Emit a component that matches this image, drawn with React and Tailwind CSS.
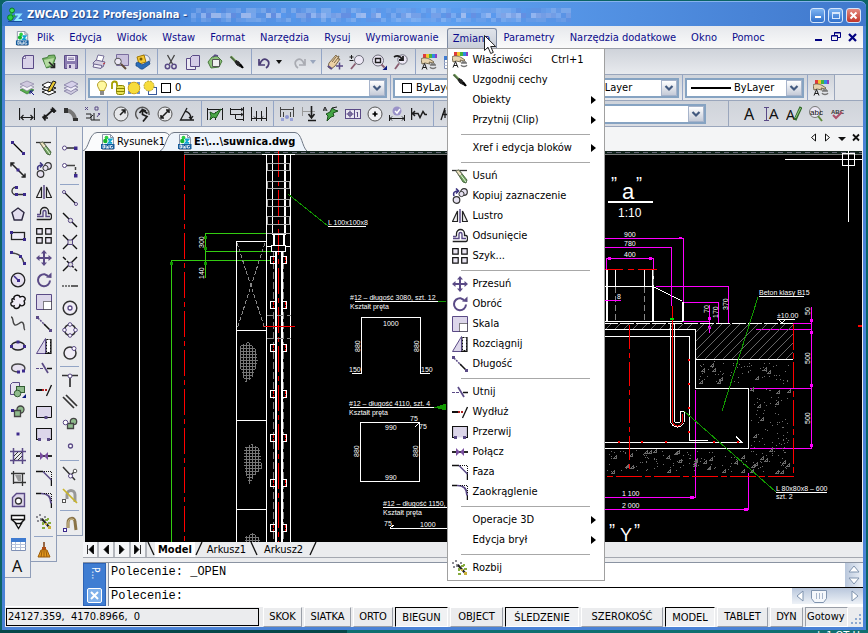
import React from "react";

const P = "#5a4a86";
const K = "#1c1c1c";

const icons = {
  logo: (
    <>
      <circle cx="5" cy="3.4" r="2.4" fill="#3fe05a" stroke="#0a7a20" />
      <circle cx="3.4" cy="10.6" r="2.8" fill="#2ccf46" stroke="#0a7a20" />
      <path d="M4.5 5.5L4 8.5M6.5 9.5l2-1" stroke="#1fae3a" strokeWidth="2" />
      <path d="M8 7.5h5.5L9 13h6" stroke="#8fe8ff" strokeWidth="2" />
      <path d="M1 14.5h14" stroke="#154c9c" />
    </>
  ),
  dwg: (
    <>
      <path d="M2.5.5h8l3 3v12h-11z" fill="#fdfdfd" stroke="#8b96a8" />
      <path d="M10.5.5v3h3" stroke="#8b96a8" />
      <circle cx="6.500" cy="3.600" r="1.900" fill="#2ecf44" />
      <circle cx="5.300" cy="7" r="2.200" fill="#16b52e" />
      <path d="M8 5.500h3.400L8.600 8.800h3.600" stroke="#10a4d0" strokeWidth="1.800" />
      <rect x="1" y="10" width="13.500" height="5" fill="#155c9c" />
      <path d="M3 11v3h1.500v-3zM6 11v3h3v-3M7.500 12v2M12.500 11.500h-2v2.500h2v-1.200" stroke="#fff" strokeWidth=".8" />
    </>
  ),
  fresh: (
    <>
      <path d="M5.500 1.500h9v13h-11v-11z" fill="#d9d2e8" stroke={P} />
      <path d="M3.500 4.500l3-3v3z" fill="#fff" stroke={P} strokeWidth=".7" />
    </>
  ),
  open: (
    <>
      <path d="M1.500 4.500l5-1 1-2 6-.500 1 3-3 8-6 2z" fill="#7cb66a" stroke="#3f7a38" />
      <path d="M3 6l10-2-2 6-6 3z" fill="#b5dba2" />
      <path d="M8 8l5 5m.500-4v4.500h-4" stroke="#222" strokeWidth="1.600" />
    </>
  ),
  save: (
    <>
      <path d="M1.500 1.500h13v13h-13z" fill="#8a7bb0" stroke={P} />
      <path d="M4 2h8v5H4z" fill="#eeeaf6" />
      <path d="M5 4h6M5 5.500h6" stroke={P} strokeWidth=".7" />
      <path d="M4 10h8v5H4z" fill="#d8d1e6" />
      <path d="M6 11h2v3H6z" fill={P} />
    </>
  ),
  print: (
    <>
      <path d="M5 7l2-6 6 1-2 6z" fill="#fff" stroke="#77709a" />
      <path d="M2 9l3-3 9 2-2 5H4z" fill="#d6d0e2" stroke="#6d6490" />
      <path d="M3 10l8 1.500-1 3-8-1.500z" fill="#f2eff8" stroke="#6d6490" />
      <path d="M12 10l2-1" stroke="#c33" />
    </>
  ),
  preview: (
    <>
      <path d="M3.500.500h12v11h-12z" fill="#c9c1dd" stroke="#7a6e9e" />
      <circle cx="5" cy="7.500" r="3.300" fill="#ece8f5" stroke="#555" />
      <path d="M8 10l5 5" stroke="#5f4b3a" strokeWidth="2" />
    </>
  ),
  globe: (
    <>
      <circle cx="10" cy="6" r="5" fill="#e7eaf2" stroke="#7784a5" />
      <path d="M2 3l7-2 2 7-7 2z" fill="#f6c936" stroke="#a27800" />
      <path d="M1 9c2-2 5 1 6 2l7-4 1 3-7 5c-3 1-5-3-7-3z" fill="#2b6cb8" stroke="#174680" strokeWidth=".7" />
      <circle cx="6" cy="5" r="1.500" fill="#7a5a00" />
    </>
  ),
  cut: (
    <>
      <path d="M4.500 1l5 9M11.500 1l-5 9" stroke="#444" strokeWidth="1.300" />
      <circle cx="4.500" cy="12.500" r="2.200" stroke={P} strokeWidth="1.500" />
      <circle cx="11" cy="12.500" r="2.200" stroke={P} strokeWidth="1.500" />
    </>
  ),
  copy: (
    <>
      <path d="M1.500 4.500h9v11h-9z" fill="#eceaf3" stroke={P} />
      <path d="M7.500 1.500h7v11h-9v-9z" fill="#d4cce6" stroke={P} />
    </>
  ),
  paste: (
    <>
      <path d="M1 8l4-5 5-1 5 5-3 6-8 1z" fill="#8dc07a" stroke="#48793c" />
      <path d="M5.500 5.500h7v7h-7z" fill="#eee" stroke="#555" />
      <path d="M6 3l2-2 3 1" stroke={P} strokeWidth="1.500" />
    </>
  ),
  brush: (
    <>
      <path d="M1.500 2.500l6 6" stroke="#4c6b3c" strokeWidth="2" />
      <path d="M3 2l4 4" stroke="#a9cf96" />
      <path d="M7 6.500l3 1.500 3 5.500-5-2.500-2-3z" fill="#222" stroke="#222" />
      <path d="M11 10l3 4" stroke="#000" strokeWidth="2" />
    </>
  ),
  undo: <path d="M2 5v6h6M3 10c1-4 4-6 7-4s2 6-1 8" stroke="#4a3d75" strokeWidth="1.700" />,
  redo: <path d="M14 5v6H8m5-1c-1-4-4-6-7-4s-2 6 1 8" stroke="#a9abb2" strokeWidth="1.700" />,
  hand: (
    <>
      <path d="M2 9L9 1l1 2 2-1-1 3 2 0-5 7-4 3-3-2z" fill="#ecd0a4" stroke="#7d6a4c" />
      <path d="M5 8l4-5M7 9l4-5" stroke="#7d6a4c" />
      <path d="M12.500 8.500v7M9 12h7" stroke={P} strokeWidth="1.500" />
      <path d="M1 12l4 3" stroke={P} strokeWidth="2" />
    </>
  ),
  zoomrt: (
    <>
      <circle cx="10" cy="6" r="4.500" fill="#ede8f5" stroke="#6c6c78" />
      <path d="M6.500 9.500L2 15" stroke="#8a5d70" strokeWidth="1.800" />
      <path d="M.500 3h4M2.500 1v4M.500 6.500h4" stroke={K} />
    </>
  ),
  zoomwin: (
    <>
      <circle cx="7" cy="6.500" r="5.500" fill="#ede8f5" stroke="#6c6c78" />
      <path d="M4.500 4.500h5v4h-5z" stroke={K} strokeWidth="1.400" />
      <path d="M10.500 10.500l3 3" stroke="#8a5d70" strokeWidth="1.800" />
      <path d="M16 11.500V16h-4.500z" fill="#0c1a80" />
    </>
  ),
  zoomprev: (
    <>
      <circle cx="9.500" cy="5.500" r="4.700" fill="#ede8f5" stroke="#6c6c78" />
      <path d="M6 9.500L2 15" stroke="#8a5d70" strokeWidth="1.800" />
      <path d="M1 3c3-2 6-1 8 2m1-3v4H6" stroke={K} strokeWidth="1.800" />
    </>
  ),
  props: (
    <>
      <path d="M2 0h3v4H2z" fill="#e23a3a" />
      <path d="M5 0h3v4H5z" fill="#f0c531" />
      <path d="M8 0h3v4H8z" fill="#46b53d" />
      <path d="M11 0h3v4h-3z" fill="#2f8ae0" />
      <path d="M14 0h2v4h-2z" fill="#8a3fc4" />
      <path d="M0 5c3-2 7-1 10 1l3 2-1 1-4-1 1 2-5-1-3 1z" fill="#e6d3ae" stroke="#6d6147" strokeWidth=".9" />
      <path d="M1 15.500l2.500-6 2.500 6M2 13.500h3" stroke={K} />
      <path d="M9 11h6M9 13c1 2 5 2 6 0M10 10h4" stroke="#777" strokeWidth="1.300" />
    </>
  ),
  layersG: (
    <>
      <path d="M1 10l7-3 7 3-7 4z" fill="#59ad4c" stroke="#2e7a2c" strokeWidth=".7" />
      <path d="M1 7l7-3 7 3-7 4z" fill="#f5f5f8" stroke="#8b84a4" strokeWidth=".7" />
      <path d="M1 4l7-3 7 3-7 3.500z" fill="#cfc8de" stroke="#8b84a4" strokeWidth=".7" />
      <path d="M15 15l-4-4m0 3v-3h3" stroke="#16108a" />
    </>
  ),
  layersE: (
    <>
      <path d="M1 12l7-3 7 3-7 3z" fill="#fff" stroke={K} />
      <path d="M1 9l6-4 8 3-7 3z" fill="#fff" stroke={K} />
      <path d="M1 5l6-3 6 2-7 4z" fill="#fff" stroke={K} />
      <path d="M7 10l5-9 3 1-5 9-3 1z" fill="#e8c733" stroke={K} />
    </>
  ),
  layersP: (
    <>
      <path d="M1 11l8-3 6 2-7 4.500z" fill="#cfcbe0" stroke="#7f78a0" strokeWidth=".8" />
      <path d="M1 8l8-3 6 2-7 4.500z" fill="#f1effa" stroke="#7f78a0" strokeWidth=".8" />
      <path d="M1 5l8-4 6 3-7 4z" fill="#d6d0ea" stroke="#7f78a0" strokeWidth=".8" />
    </>
  ),
  bulb: (
    <>
      <path d="M5.500 10.500c0-2-2-3-2-5.500a4.500 4 0 019 0c0 2.500-2 3.500-2 5.500z" fill="#fff8a0" stroke="#b59f2c" />
      <path d="M6 12h4M6 14h4" stroke="#666" strokeWidth="1.300" />
    </>
  ),
  lock: (
    <>
      <path d="M2 9V4a2.500 2.500 0 015 0v2" stroke="#a6a000" strokeWidth="1.800" />
      <rect x="6.500" y="5.500" width="8" height="9" rx="2" fill="#e8e255" stroke="#8b8500" />
      <path d="M7 8.500h7M7 11.500h7" stroke="#8b8500" />
    </>
  ),
  sun: (
    <>
      <path d="M2 2h3v3H2zM11 2h3v3h-3zM2 11h3v3H2zM11 11h3v3h-3z" fill="#6f93cf" />
      <circle cx="8" cy="8" r="5.800" fill="#f7dc3c" stroke="#c9a21d" />
    </>
  ),
  sunSq: (
    <>
      <rect x="6.500" y="7.500" width="8" height="7" fill="#fff" stroke="#37599c" />
      <circle cx="7" cy="6" r="5" fill="#f7dc3c" stroke="#b5a12c" strokeDasharray="2 1" />
    </>
  ),
  square: <rect x="3.500" y="3.500" width="9" height="9" fill="#fff" stroke="#000" />,
  dLin: <path d="M.500 2v12M15.500 2v12M2 11.500h12M4.500 9L2 11.500 4.500 14M11.500 9l2.500 2.500-2.500 2.500" stroke={K} strokeWidth="1.200" />,
  dAli: <path d="M1.500 10.500l3 4M11 1.500l4 4M3 12L13 3M3.500 8.500V12H7M9.500 3.500H13V7" stroke={K} strokeWidth="1.700" />,
  dArc: (
    <>
      <path d="M3 5c5-1 9 4 9 9" stroke="#777" strokeWidth="4" />
      <path d="M1 2h4v5H1zM10 12h5v3h-5z" fill="#333" />
    </>
  ),
  dOrd: (
    <>
      <path d="M0 1l3 3M3 1L0 4M10 1h3v3h-3zM13 7l2 2M15 7l-3 4" stroke={P} />
      <path d="M1 8h5v6h9M9 7v7M1 12h4l3-3" stroke={K} />
    </>
  ),
  dRad: (
    <>
      <circle cx="8" cy="8" r="7" fill="#e6e7ea" stroke="#555" />
      <path d="M7 9l5-5M8.500 4H12v3.500" stroke={K} strokeWidth="1.500" />
    </>
  ),
  dJog: (
    <>
      <path d="M3 13A6.700 6.700 0 1114 9" stroke="#555" strokeWidth="1.400" />
      <path d="M12.500 7.500L7.500 4v4.500l4.500 2-4 5M4.500 7l3-3.500L11 5" stroke={K} strokeWidth="1.700" />
    </>
  ),
  dDia: (
    <>
      <circle cx="8" cy="8" r="7" fill="#e6e7ea" stroke="#555" />
      <path d="M4 12l8-8M9 4h3v3M4 9v3h3" stroke={K} strokeWidth="1.500" />
    </>
  ),
  dAng: <path d="M8 2L1.500 14H15M6 5c4 1 6 4 6 8M10 11l2 2 2-3" stroke={K} strokeWidth="1.300" />,
  dQuick: (
    <>
      <path d="M.500 2v12M8.500 6v8M15.500 2v12M1 3.500h14" stroke={K} />
      <path d="M3 6l4 2 7-5-5 9-3-1-3 3 1-4z" fill="#4aa848" stroke="#1c5c1b" />
    </>
  ),
  dBase: <path d="M1.500 2v7M14.500 1v14M2 3.500h12M6.500 8v5M2 8.500h12M7 13.500h7M12 2l2 1.500L12 5M12 7l2 1.500-2 1.500" stroke={K} />,
  dCont: <path d="M.500 1v14M5.500 5v10M10.500 5v10M15.500 1v14M1 12.500h14M3 10.500l2 2M12 10.500l-2 2" stroke={K} />,
  dSpace: (
    <>
      <path d="M1.500 1v10M14.500 1v10M2 3.500h12M4.500 6v5M11.500 6v5" stroke="#444" />
      <path d="M2 12h3v3H2zM11 12h3v3h-3z" fill="#9aa3d8" />
      <circle cx="8" cy="11" r="2" fill="#8c95d0" />
    </>
  ),
  dBreak: (
    <>
      <path d="M1.500 1v9M2 5.500h12" stroke="#999" />
      <path d="M10.500 0v11M7 14.500h8M7.500 8l3 4 3-4" stroke={K} strokeWidth="1.600" />
    </>
  ),
  dLead: (
    <>
      <path d="M3 8l4-2 2-4 3 2 3 1-5 2 1 3-3 1-4 4 1-5z" fill="#44a544" stroke="#1b4f1b" />
      <path d="M0 5l2-4 2 4M1 4h2M9 2l5-1" stroke={K} />
    </>
  ),
  dTol: (
    <>
      <rect x=".500" y="3.500" width="15" height="9" fill="#e8e6f0" stroke={P} />
      <path d="M9.500 4v8M5 4.500v7M1.500 8h7M12.500 6v5M11.500 6.500h1" stroke={P} />
      <circle cx="5" cy="8" r="2" stroke={P} />
    </>
  ),
  dCen: (
    <>
      <circle cx="8" cy="8" r="7" fill="#f0f0f3" stroke="#555" />
      <path d="M8 5.500v5M5.500 8h5" stroke="#000" strokeWidth="1.700" />
    </>
  ),
  dInsp: (
    <>
      <circle cx="8" cy="5" r="4.500" fill="#9a92c8" />
      <path d="M6 5l2 2 3-4" stroke="#fff" strokeWidth="1.500" />
      <path d="M.500 9v6M15.500 9v6M1 12.500h14M3 10.500l-2 2 2 2M13 10.500l2 2-2 2" stroke={K} />
    </>
  ),
  dJogL: <path d="M.500 2v12M1 7.500h6l2 4 3-6 2 3h2M4 5L1.500 7.500 4 10" stroke={K} strokeWidth="1.500" />,
  dEdit: <path d="M2 14l4-12M3 8.500h11M11 6l3 2.500-3 2.500M6 4v8" stroke={K} strokeWidth="1.300" />,
  line: (
    <>
      <path d="M2 2l11 11" stroke="#000" strokeWidth="1.300" />
      <path d="M1 1h3v3H1zM12 12h3v3h-3z" fill="#3c2a8c" />
    </>
  ),
  xline: (
    <>
      <path d="M1 1l14 14M1 4.500V1h3.500M15 11.500V15h-3.500" stroke="#222" strokeWidth="1.500" />
      <path d="M6.500 6.500h3v3h-3z" fill="#3c2a8c" />
    </>
  ),
  pline: (
    <>
      <path d="M8 3.500H4a4 4 0 000 7h10" stroke="#333" strokeWidth="1.300" />
      <path d="M5 2h3v3H5zM5 9h3v3H5zM13 9h3v3h-3z" fill="#3c2a8c" />
    </>
  ),
  polygon: <path d="M8 2l6 4.500L11.800 14H4.200L2 6.500z" fill="#e3deee" stroke="#2c2840" strokeWidth="1.400" />,
  rect: (
    <>
      <rect x="1.500" y="4.500" width="13" height="7" fill="#eeebf6" stroke="#222" strokeWidth="1.300" />
      <path d="M0 3h3v3H0zM13 10h3v3h-3z" fill="#3c2a8c" />
    </>
  ),
  arc: (
    <>
      <path d="M1 3c8 0 12 4 13 11" stroke="#444" strokeWidth="1.300" />
      <path d="M0 1h3v3H0zM9 5h3v3H9zM13 12h3v3h-3z" fill="#3c2a8c" />
    </>
  ),
  circle: (
    <>
      <circle cx="8" cy="8" r="6.800" fill="#e6e1f0" stroke="#222" strokeWidth="1.300" />
      <path d="M4 4l4.500 4.500" stroke="#3c2a8c" strokeWidth="1.500" />
      <path d="M7 7h3v3H7z" fill="#3c2a8c" />
    </>
  ),
  cloud: <path d="M4 5c-1-4 5-5 6-2 4-2 7 2 4 4 2 4-2 6-4 4-1 5-7 4-6 1-4 1-4-5-1-4-2-2-1-4 1-3z" fill="#f0edf6" stroke="#111" strokeWidth="1.400" />,
  spline: <path d="M1 1c3 0 1 7 4 8s6-5 8-2 0 6 2 7" stroke="#444" strokeWidth="1.400" />,
  ellipse: (
    <>
      <ellipse cx="8" cy="8" rx="6.500" ry="4" fill="#e6e1f0" stroke="#222" strokeWidth="1.300" />
      <path d="M0 7h3v3H0zM6.500 2.500h3v3h-3zM13 7h3v3h-3z" fill="#3c2a8c" />
    </>
  ),
  earc: (
    <>
      <path d="M8 12C-1 12 0 4 8 4s8 6 5 7" fill="#e6e1f0" stroke="#444" strokeWidth="1.400" />
      <path d="M7 10.500h3v3H7zM12 9.500h3v3h-3z" fill="#3c2a8c" />
    </>
  ),
  insblk: (
    <>
      <path d="M.500 2.500l2-2h7v12h-9z" fill="#e6e1f0" stroke={P} />
      <rect x="6.500" y="4.500" width="8" height="6" fill="#8fbb8c" stroke="#325c32" />
      <circle cx="7.500" cy="11.500" r="3.300" fill="#8fbb8c" stroke="#325c32" />
      <path d="M16 12v4h-4z" fill="#0c1a80" />
    </>
  ),
  mkblk: (
    <>
      <circle cx="10.500" cy="5.500" r="3.500" fill="#8fbb8c" stroke="#444" strokeWidth="1.300" />
      <path d="M4.500 6.500h6v6h-6z" fill="#8fbb8c" stroke="#444" strokeWidth="1.300" />
      <path d="M1 5h3v3H1z" fill="#3c2a8c" />
    </>
  ),
  point: <path d="M6.500 6.500h3v3h-3z" fill="#3c2a8c" />,
  hatch: (
    <>
      <path d="M3.500 0v16M12.500 0v16M0 3.500h16M0 12.500h16" stroke={P} strokeWidth="1.500" />
      <path d="M4 8l4-4M4 12l8-8M8 12l4-4" stroke="#333" />
    </>
  ),
  region: (
    <>
      <path d="M3.500 1v13M12.500 3v13M1 3.500h14M3 12.500h13" stroke="#333" strokeWidth="1.300" />
      <path d="M5 5h6v6H8z" fill="#999" />
    </>
  ),
  wipe: (
    <>
      <path d="M2.500 14.500v-9l4-4h8v13z" fill="#ddd6ea" stroke={P} strokeWidth="1.400" />
      <circle cx="8.500" cy="9" r="3" fill="#fff" stroke="#333" strokeWidth="1.300" />
    </>
  ),
  screw: <path d="M1.500 1.500h13v4h-13zM1.500 5.500l5 4h4l4-4M5.500 9.500h6l-3 5z" fill="#fff" stroke="#111" strokeWidth="1.400" />,
  tbl: (
    <>
      <path d="M1.500 2.500h14v12h-14z" fill="#fff" stroke="#7f90b5" />
      <path d="M1 2h15v4H1z" fill="#3f7bd0" />
      <path d="M1.500 8.500h14M1.500 11.500h14M5.500 6v8M10.500 6v8" stroke="#b6c2da" />
    </>
  ),
  erase: (
    <>
      <path d="M0 2.500h15" stroke="#333" strokeWidth="1.300" />
      <path d="M4 3l3-1 8 10-1 3-3-1z" fill="#6fa35c" stroke="#4c6a44" />
      <path d="M4 3l2.500-1L10 6 7.500 8z" fill="#eee3c0" stroke="#776" />
      <path d="M8 6l6 8" stroke="#e9f5e2" />
    </>
  ),
  dup: (
    <>
      <circle cx="12" cy="4" r="3.300" fill="#e6e1f0" stroke="#333" strokeWidth="1.200" />
      <circle cx="9.500" cy="6" r="2.600" fill="#e6e1f0" stroke="#333" />
      <circle cx="4.500" cy="12" r="3.300" fill="#e6e1f0" stroke="#333" strokeWidth="1.200" />
      <path d="M2 8c-1-3 0-5 4-5M4 .500L6.500 3 4 5.500" stroke="#3c3480" strokeWidth="1.600" />
    </>
  ),
  mirror: (
    <>
      <path d="M5.500 3v10.500H.500zM10.500 3v10.500h5z" fill="#eee" stroke="#222" strokeWidth="1.200" />
      <path d="M8 1v14" stroke={P} strokeWidth="1.500" />
    </>
  ),
  offset: (
    <>
      <path d="M4.500 8.500V5.500a4 4 0 018 0v2h1.500a1.500 3 0 010 6H.700" stroke="#222" strokeWidth="1.300" />
      <path d="M1 10.500h6V6a1.500 1.500 0 013 0v4.500h4M1 8.500h3" stroke={P} strokeWidth="1.400" />
    </>
  ),
  array: <path d="M.700.700h5.500v5.500H.700zM9.700.700h5.500v5.500H9.700zM.700 9.700h5.500v5.500H.700zM9.700 9.700h5.500v5.500H9.700z" fill="#eae6f3" stroke="#111" strokeWidth="1.200" />,
  move: <path d="M8 0l3 3.500H9V7h3.500V5L16 8l-3.500 3V9H9v3.500h2L8 16l-3-3.500h2V9H3.500v2L0 8l3.500-3v2H7V3.500H5z" fill={P} />,
  rotate: (
    <>
      <path d="M14 8.500A6 6 0 118.500 2.200L12 4" stroke={P} strokeWidth="2" />
      <path d="M10 5.500L15.500 6V.500z" fill={P} />
    </>
  ),
  scale: (
    <>
      <path d="M.500.500h15v15H.500z" fill="#dcd6ea" stroke={P} />
      <path d="M7.500 7.500h8v8h-8z" fill="#fff" stroke="#111" strokeDasharray="1 1" />
    </>
  ),
  lengthen: (
    <>
      <path d="M2 2l7 7" stroke={P} strokeWidth="1.500" strokeDasharray="2 1" />
      <path d="M8 8l6 6" stroke="#111" strokeWidth="1.500" />
      <path d="M0 0h3v3H0zM13 13h3v3h-3z" fill={P} />
    </>
  ),
  stretch: (
    <>
      <path d="M9.500.500L.500 15.500h9z" fill="#dcd6ea" stroke={P} />
      <path d="M10.500 1.500h4v13h-4z" fill="#fff" stroke="#111" strokeDasharray="2 1" />
      <path d="M15 1v14.500H9" stroke="#111" strokeWidth="1.200" />
    </>
  ),
  trim: (
    <>
      <path d="M0 8.500h7" stroke={P} strokeDasharray="3 1" />
      <path d="M11 8.500h5" stroke="#111" strokeWidth="1.500" />
      <path d="M6 3l6 10" stroke={P} strokeWidth="1.700" />
    </>
  ),
  extend: (
    <>
      <path d="M0 8h6" stroke="#111" strokeWidth="2" />
      <path d="M6 8h6" stroke="#b02020" strokeWidth="2" strokeDasharray="2 1" />
      <path d="M15.500 3l-5 11" stroke="#111" strokeWidth="1.300" />
    </>
  ),
  breakPt: (
    <>
      <path d="M.500 2.500h15v11H.500z" fill="#dcd6ea" stroke="#111" />
      <path d="M8.500 12h3v3h-3z" fill={P} />
    </>
  ),
  breakIt: (
    <>
      <path d="M.500 2.500h15v11H.500z" fill="#dcd6ea" />
      <path d="M3 13.500H.500v-11h15v11H13" stroke="#111" strokeWidth="1.200" />
      <path d="M2 12h3v3H2zM11 12h3v3h-3z" fill={P} />
    </>
  ),
  join: (
    <>
      <path d="M0 8h16" stroke="#111" strokeWidth="1.800" />
      <path d="M4 4l4 4-4 4zM12 4L8 8l4 4z" fill="#7a4fa0" />
    </>
  ),
  chamfer: (
    <>
      <path d="M0 1.500h7M15.500 9v7" stroke="#111" strokeWidth="1.500" />
      <path d="M7 1.500L15.500 10" stroke={P} strokeWidth="1.500" />
      <path d="M8 1.500h7.500V9" stroke="#111" strokeDasharray="1 1" />
    </>
  ),
  fillet: (
    <>
      <path d="M0 1.500h5M15.500 11v5" stroke="#111" strokeWidth="1.500" />
      <path d="M5 1.500c7 0 10 3 10 10" stroke={P} strokeWidth="1.700" />
      <path d="M8 1.500h7.500V9" stroke="#111" strokeDasharray="1 1" />
    </>
  ),
  explode: (
    <>
      <path d="M0 2h2v2H0zM3 0h2v2H3zM4 4h3v3H4zM1 6h2v2H1zM8 2h2v2H8z" fill="#8c8c94" />
      <path d="M6 5l8 9" stroke="#222" strokeWidth="2" />
      <path d="M6 8h2v3H6zM9 5h3v2H9zM12 8h3v2h-3zM6 13h3v2H6zM11 4h2v2h-2z" fill="#86ac3e" />
      <path d="M9 9h2v2H9zM12 12h3v3h-3z" fill="#c9b03a" />
    </>
  ),
  broom: (
    <>
      <path d="M8 0v6" stroke="#7a3e10" strokeWidth="1.500" />
      <path d="M6 5h4v3H6z" fill="#b14c12" />
      <path d="M5 8h6l3 7H2z" fill="#e39a1e" stroke="#9a5a08" />
      <path d="M6 9l-1 6M8 9v6M10 9l1 6" stroke="#9a5a08" />
    </>
  ),
  sTrack: (
    <>
      <path d="M3 8h10" stroke="#444" strokeWidth="1.700" />
      <circle cx="2.500" cy="8" r="2" fill="#fff" stroke={P} />
      <path d="M12 6.500h3.500v3.500H12z" fill="#3c2a8c" />
    </>
  ),
  sFrom: (
    <>
      <path d="M3 3.500h10.500V12" stroke="#444" strokeWidth="1.500" strokeDasharray="10 2 3 2" />
      <circle cx="2.500" cy="3.500" r="2" fill="#fff" stroke={P} />
      <path d="M12 12h3.500v3.500H12z" fill="#3c2a8c" />
    </>
  ),
  sEnd: (
    <>
      <path d="M3 3l11 11" stroke="#111" strokeWidth="1.300" />
      <circle cx="2" cy="2" r="1.500" fill="#fff" stroke={P} />
      <circle cx="14" cy="14" r="1.500" fill="#fff" stroke={P} />
    </>
  ),
  sMid: (
    <>
      <path d="M1 1l14 14" stroke="#111" strokeWidth="1.400" />
      <circle cx="8.500" cy="8.500" r="2.200" fill="#ddd" stroke={P} />
    </>
  ),
  sInt: (
    <>
      <path d="M1 1l14 14M15 1L1 15" stroke="#111" strokeWidth="1.400" />
      <path d="M6 6h4.500v4.500H6z" fill="#ddd" stroke={P} />
    </>
  ),
  sApp: (
    <>
      <path d="M1 15L15 1" stroke="#111" strokeWidth="1.400" />
      <path d="M1 1l14 14" stroke="#111" strokeWidth="1.400" strokeDasharray="4 1.500" />
      <circle cx="8.500" cy="8.500" r="2.200" fill="#ddd" stroke={P} />
    </>
  ),
  sExt: (
    <>
      <path d="M0 8h9" stroke="#555" strokeWidth="1.500" strokeDasharray="2 1" />
      <path d="M9 8h7" stroke="#333" strokeWidth="1.500" />
    </>
  ),
  sCen: (
    <>
      <circle cx="8" cy="8" r="6.800" fill="#f0edf6" stroke="#333" strokeWidth="1.500" />
      <circle cx="8" cy="8" r="2" fill="#fff" stroke={P} strokeWidth="1.300" />
    </>
  ),
  sQuad: (
    <>
      <circle cx="8" cy="8" r="5.500" fill="#f0edf6" stroke="#333" strokeWidth="1.500" />
      <circle cx="8" cy="2.500" r="1.800" fill="#fff" stroke={P} />
      <circle cx="8" cy="13.500" r="1.800" fill="#fff" stroke={P} />
      <circle cx="2.500" cy="8" r="1.800" fill="#fff" stroke={P} />
      <circle cx="13.500" cy="8" r="1.800" fill="#fff" stroke={P} />
    </>
  ),
  sTan: (
    <>
      <circle cx="8" cy="9" r="6" fill="#f0edf6" stroke="#333" strokeWidth="1.500" />
      <circle cx="12" cy="4.500" r="2" fill="#fff" stroke={P} />
    </>
  ),
  sPerp: (
    <>
      <path d="M0 3.500h16M8 4v11" stroke="#333" strokeWidth="1.700" />
      <circle cx="8" cy="4" r="2" fill="#fff" stroke={P} />
    </>
  ),
  sPar: <path d="M1 3l11 11M4 1l11 11" stroke="#333" strokeWidth="1.700" />,
  sIns: (
    <>
      <circle cx="11.500" cy="5.500" r="3.200" fill="#8fbb8c" stroke="#444" strokeWidth="1.300" />
      <path d="M5.500 7.500h6v5h-6z" fill="#8fbb8c" stroke="#444" strokeWidth="1.300" />
      <circle cx="3.500" cy="6.500" r="2.300" fill="#fff" stroke={P} />
    </>
  ),
  sNode: <circle cx="8.500" cy="8" r="2" fill="#fff" stroke={P} strokeWidth="1.300" />,
  sNear: (
    <>
      <path d="M1 1l12 13M9 9l4-4" stroke="#333" strokeWidth="1.500" />
      <circle cx="13" cy="5" r="1.800" fill="#fff" stroke="#555" />
      <circle cx="8.500" cy="10" r="2" fill="#fff" stroke={P} />
    </>
  ),
  sNone: (
    <>
      <path d="M5 11V7c0-6 8-6 8 0v7" stroke="#999" strokeWidth="3" />
      <path d="M1 1l14 14" stroke="#c9b52c" strokeWidth="1.700" />
      <rect x=".500" y="11.500" width="3" height="3" fill="#fff" stroke="#555" />
    </>
  ),
  sSet: (
    <>
      <path d="M6 12V7c0-6 7-6 7-1l1 8" stroke="#8a7448" strokeWidth="3" />
      <path d="M6 12V7c0-4 4-5 6-3" stroke="#e0d09c" />
      <rect x="1.500" y="12.500" width="3" height="3" fill="#fff" stroke="#3c2a8c" />
    </>
  ),
  tA: <text x="2" y="14" fontSize="16" fill="#111" fontFamily="Noto Sans, sans-serif">A</text>,
  tIA: (
    <>
      <path d="M0 1.500h5M0 14.500h5M2.500 2v12" stroke={P} />
      <text x="5" y="13" fontSize="15" fill="#111" fontFamily="Noto Sans, sans-serif">A</text>
    </>
  ),
  tEdit: (
    <>
      <text x="0" y="14" fontSize="14" fill="#111" fontFamily="Noto Sans, sans-serif">A</text>
      <path d="M15 1L9 14" stroke="#2f6a28" strokeWidth="3" />
      <path d="M14.500 2L9.500 12" stroke="#9fd08a" />
    </>
  ),
  tFind: (
    <>
      <circle cx="7" cy="6" r="5.500" fill="#ece8f5" stroke="#777" />
      <text x="2" y="9" fontSize="8" fill="#111" fontFamily="Liberation Sans, sans-serif">abc</text>
      <path d="M10 10l4 5" stroke="#5f8a3a" strokeWidth="2" />
    </>
  ),
  tSpell: (
    <>
      <text x="1" y="8" fontSize="6" fontWeight="bold" fill="#333" fontFamily="Liberation Sans, sans-serif">ABC</text>
      <path d="M3 9l3 3 6-6" stroke="#b0506a" strokeWidth="2" />
    </>
  ),
};

const Icon = ({ name, size = 16 }) => (
  <svg viewBox="0 0 16 16" width={size} height={size} fill="none" className="shrink-0" aria-hidden="true">
    {icons[name]}
  </svg>
);

const Tool = ({ name }) => (
  <button type="button" aria-label={name} className="flex h-[22px] w-[22px] shrink-0 items-center justify-center">
    <Icon name={name} />
  </button>
);

const VSep = () => (
  <div className="flex w-[6px] shrink-0 justify-center self-stretch">
    <div className="w-px bg-[#93a5c6]" />
  </div>
);

const HSep = () => (
  <div className="flex h-[6px] w-[19px] items-center">
    <div className="h-px w-full bg-[#93a5c6]" />
  </div>
);

const Tools = ({ list }) =>
  list.map((n, i) => (n === "|" ? <VSep key={i} /> : n === "-" ? <HSep key={i} /> : <Tool key={i} name={n} />));

const Drop = ({ dim }) => (
  <svg width="6" height="4" viewBox="0 0 6 4" aria-hidden="true">
    <path d="M0 0h6L3 4z" fill={dim ? "#9aa6bd" : "#111"} />
  </svg>
);

function Combo({ label, value, className, children }) {
  return (
    <div className={"relative flex h-5 shrink-0 items-center border-2 border-[#86a3c2] bg-white pl-1 " + className}>
      {children}
      <select aria-label={label} defaultValue={value} className="h-4 min-w-0 flex-1 appearance-none bg-transparent pl-px text-[11px] leading-4 text-black outline-none">
        <option>{value}</option>
      </select>
      <div className="pointer-events-none flex h-4 w-4 shrink-0 items-center justify-center border border-[#a7b4cb] bg-gradient-to-b from-white to-[#c5cbd8]">
        <svg width="10" height="8" viewBox="0 0 10 8" fill="none" aria-hidden="true">
          <path d="M1.500 2L5 5.500 8.500 2" stroke="#42597f" strokeWidth="2.200" />
        </svg>
      </div>
    </div>
  );
}

const menuItems = [
  ["Właściwości", "props", "Ctrl+1"],
  ["Uzgodnij cechy", "brush"],
  ["Obiekty", null, ">"],
  ["Przytnij (Clip)", null, ">"],
  null,
  ["Xref i edycja bloków", null, ">"],
  null,
  ["Usuń", "erase"],
  ["Kopiuj zaznaczenie", "dup"],
  ["Lustro", "mirror"],
  ["Odsunięcie", "offset"],
  ["Szyk...", "array"],
  null,
  ["Przesuń", "move"],
  ["Obróć", "rotate"],
  ["Skala", "scale"],
  ["Rozciągnij", "stretch"],
  ["Długość", "lengthen"],
  null,
  ["Utnij", "trim"],
  ["Wydłuż", "extend"],
  ["Przerwij", "breakIt"],
  ["Połącz", "join"],
  ["Faza", "chamfer"],
  ["Zaokrąglenie", "fillet"],
  null,
  ["Operacje 3D", null, ">"],
  ["Edycja brył", null, ">"],
  null,
  ["Rozbij", "explode"],
];

function ModifyMenu() {
  return (
    <div role="menu" className="absolute left-0 top-full z-20 w-[158px] border border-[#a0a0a0] bg-white pb-[2px] pt-px text-black">
      {menuItems.map((it, i) =>
        it === null ? (
          <div key={i} role="separator" className="flex h-2 items-center pl-[13px] pr-[14px]">
            <div className="h-px w-full bg-[#a8a8a8]" />
          </div>
        ) : (
          <button key={i} type="button" role="menuitem" className="flex h-5 w-full items-center pl-1 pr-2 text-left">
            <span className="flex w-[21px] shrink-0">{it[1] && <Icon name={it[1]} />}</span>
            <span className="flex-1 whitespace-nowrap">{it[0]}</span>
            {it[2] === ">" ? (
              <svg width="5" height="8" viewBox="0 0 5 8" aria-hidden="true">
                <path d="M0 0l5 4-5 4z" fill="#000" />
              </svg>
            ) : (
              it[2] && <span className="pr-3">{it[2]}</span>
            )}
          </button>
        ),
      )}
    </div>
  );
}

const Cursor = () => (
  <svg width="13" height="20" viewBox="0 0 13 20" className="pointer-events-none absolute left-[37px] top-[9px] z-30" aria-hidden="true">
    <path d="M.500.500v15l3.500-3.300 2.700 6.300 2.600-1.100L6.700 11.500h5z" fill="#fff" stroke="#222" />
  </svg>
);

const MenuButton = ({ children }) => (
  <button type="button" className="h-5 shrink-0 whitespace-nowrap pl-[7px] pr-2">
    {children}
  </button>
);

/* deterministic noise for the title smear and the concrete texture */
function noise(seed) {
  let s = seed;
  return () => {
    s = (s * 16807) % 2147483647;
    return s / 2147483647;
  };
}

function TitleSmear() {
  const r = noise(77);
  const shades = ["#5d93e4", "#86aef0", "#a9c0f2", "#7fa0e4", "#6a8ade", "#b9c8f0", "#5a98ee", "#8fa8e6"];
  const cells = [];
  for (let x = 0; x < 76; x++) for (let y = 0; y < 3; y++) cells.push([x * 5, y * 5, shades[Math.floor(r() * shades.length)]]);
  return (
    <svg width="380" height="14" viewBox="0 0 380 14" className="ml-1 shrink-0" aria-hidden="true">
      {cells.map(([x, y, c], i) => (
        <rect key={i} x={x} y={y} width="5" height="5" fill={c} opacity={y === 5 ? 0.7 : 0.35} />
      ))}
    </svg>
  );
}

const T = ({ x, y, s = 7, r, children }) => (
  <text x={x} y={y} fontSize={s} fill="#fff" stroke="none" transform={r ? `rotate(-90 ${x} ${y})` : undefined}>
    {children}
  </text>
);

function speckles() {
  const r = noise(4211);
  const zones = [
    [697, 361, 95, 26, 75],
    [750, 388, 42, 87, 110],
    [605, 450, 145, 25, 115],
  ];
  let d = "";
  zones.forEach(([x, y, w, h, n]) => {
    for (let i = 0; i < n; i++) {
      const px = Math.round(x + r() * (w - 4));
      const py = Math.round(y + r() * (h - 4));
      d += r() > 0.8 ? `M${px} ${py + 2}l2 0l0 -2z` : `M${px} ${py + 0.5}h1`;
    }
  });
  return d;
}

function diagonals() {
  let d = "";
  for (let c = 1028; c < 1156; c += 9) {
    const x1 = Math.max(696, c - 359);
    const x2 = Math.min(793, c - 324);
    if (x2 > x1) d += `M${x1} ${c - x1}L${x2} ${c - x2}`;
  }
  for (let x = 606; x < 694; x += 9) d += `M${x} 329l5 -5`;
  return d;
}

function Drawing() {
  const bolts = [260, 305, 348, 394, 438, 483, 528];
  return (
    <svg
      viewBox="85 151 777 391"
      preserveAspectRatio="xMinYMin slice"
      className="absolute inset-0 h-full w-full"
      fill="none"
      stroke="#fff"
      shapeRendering="crispEdges"
      fontFamily="'Liberation Sans Narrow', 'Liberation Sans', sans-serif"
      role="img"
      aria-label="suwnica.dwg"
    >
      <defs>
        <pattern id="mesh" width="3" height="3" patternUnits="userSpaceOnUse">
          <path d="M0 .500h3M.500 0v3" stroke="#777" />
        </pattern>
      </defs>
      <rect x="184" y="151" width="678" height="3" fill="#10221a" stroke="none" />
      <path d="M184 152.500H862" stroke="#667" strokeDasharray="5 4" />
      <path d="M184 154.500H862" stroke="#777" />
      <path d="M139.500 151V542" />
      <path d="M184.500 155V542M278.500 151V542" stroke="#f00" strokeDasharray="26 4 5 4" />
      <path d="M171.500 542V260.500H272M205.500 278V233.500H268M205 251.500H272" stroke="#3c1" />
      <path d="M170 262h3v3h-3zM204 236h3v3h-3zM204 247h3v3h-3zM204 262h3v3h-3z" fill="#190" stroke="none" />
      <T x="204" y="248" r>300</T>
      <T x="204" y="279" r>140</T>

      <path d="M262 154.500H295M266.500 154V542M290.500 154V542M272.500 154V233" />
      <path d="M285 154V233" strokeWidth="2" />
      <path d="M267.500 163.500h22v7h-22zM267.500 181.500h22v7h-22zM267.500 199.500h22v7h-22zM267.500 216.500h22v8h-22zM267 233.500h23" stroke="#aaa" />
      <path d="M274 234v12M284 234v12" strokeWidth="2" />
      <path d="M272 234.500h14M271.500 245.500h14v6h-14zM267 246.500h5M286 246.500h5" />
      <path d="M276 252V542M282 252V542" strokeWidth="2" />
      <path d="M273.500 252V542M283.500 252V542" stroke="#888" strokeDasharray="7 3" />
      {bolts.map((y) => (
        <g key={y}>
          <path d={`M275 ${y - 3.5}h-4.500v7h4.500M283 ${y - 3.5}h3.500v7h-3.500`} fill="#000" />
          <path d={`M273.500 ${y - 3}v6M285.500 ${y - 3}v6`} stroke="#f00" strokeDasharray="3 1" />
        </g>
      ))}
      <path d="M267 315.500h24M267 338.500h24" stroke="#888" strokeDasharray="7 3" />
      <path d="M263 326.500H295" stroke="#f00" />

      <path d="M236.500 542V241.500H266M236 330.500H266M236 420.500H266M236 509.500H266" />
      <path d="M237 243L265 329M265 243L237 329" stroke="#888" strokeDasharray="4 2" />
      <path d="M240 346l8-4 8 8 2 12-6 16-7 5-5-16z" fill="url(#mesh)" stroke="none" />
      <path d="M244 448l8-4 8 5 2 19-7 7-6 10-5-19z" fill="url(#mesh)" stroke="none" />
      <path d="M245 542v-5l8-4 7 5v4z" fill="url(#mesh)" stroke="none" />

      <path d="M288 194L328 226M438 301.500h8" stroke="#190" />
      <path d="M328 226.500H366M355 301.500H438" />
      <T x="328" y="225">L 100x100x8</T>
      <T x="350" y="300">#12 – długość 3080,  szt. 12</T>
      <T x="350" y="309">Kształt pręta</T>
      <path d="M352 373.500H361.500V317.500H420.500V373.500H430" />
      <T x="383" y="326">1000</T>
      <T x="360" y="352" r>880</T>
      <T x="419" y="352" r>880</T>
      <T x="349" y="372">150</T>
      <T x="421" y="372">150</T>

      <T x="349" y="406">#12 – długość 4110,  szt. 4</T>
      <T x="349" y="415">Kształt pręta</T>
      <path d="M350 407.500H434M360.500 422.500H419.500V481.500H360.500zM415 427l5-5" />
      <path d="M434 407.500l12-4v7z" fill="#190" stroke="none" />
      <T x="410" y="421">75</T>
      <T x="419" y="429">75</T>
      <T x="385" y="430">990</T>
      <T x="385" y="480">990</T>
      <T x="359" y="457" r>880</T>
      <T x="418" y="457" r>880</T>

      <T x="383" y="506">#12 – długość 1150,</T>
      <T x="383" y="515">Kształt pręta</T>
      <path d="M383 507.500H447M390 528.500H447M390 528l4-3" />
      <T x="384" y="526">75</T>
      <T x="420" y="527">1000</T>

      <T x="611" y="190" s={18}>”</T>
      <T x="636" y="190" s={18}>”</T>
      <T x="622" y="199" s={22}>a</T>
      <path d="M608 202H653" strokeWidth="2" />
      <T x="618" y="217" s={12}>1:10</T>

      <path d="M615.500 270V286M644.500 270V286M604 286.500H654M604 321.500H683M654 287L682 301" />
      <path d="M607 270V322M653 270V322M683 302V322" strokeWidth="2" />
      <path d="M615.500 287V321M644.500 287V321M653.500 270V286" stroke="#888" strokeDasharray="6 3" />
      <path d="M604 269.500H661" stroke="#f00" strokeDasharray="19 5 6 4" />
      <g stroke="#f0f">
        <path d="M604 238.500H683.500V302M604 247.500H671.500V306M606.500 270V258.500H653.500V269M604 300.500H621" />
        <path d="M656 286.500H728.500V323M684 302.500H718.500V323M683 321.500H709M709.500 305V333" />
        <path d="M793 323.500H811M756 329.500H811M811.500 307V448.500H750M750 388.500H811M695.500 390V497.500H604M748.500 473V509.500H604" />
      </g>
      <path d="M608 257h3v3h-3zM649 257h3v3h-3zM708 317h3v3h-3zM708 326h3v3h-3zM690 496h4v3h-4zM744 508h4v3h-4zM679 237h3v2h-3zM810 319h3v3h-3zM810 331h3v3h-3zM810 384h3v3h-3zM810 444h3v3h-3z" fill="#f0f" stroke="none" />
      <T x="624" y="237">900</T>
      <T x="624" y="246">780</T>
      <T x="624" y="257">400</T>
      <T x="617" y="299">8</T>
      <T x="709" y="313" r>70</T>
      <T x="718" y="318" r>170</T>
      <T x="728" y="310" r>370</T>
      <T x="810" y="315" r>50</T>
      <T x="810" y="364" r>500</T>
      <T x="810" y="424" r>500</T>

      <path d={diagonals()} stroke="#666" />
      <path d={speckles()} stroke="#6c6c6c" />
      <path d="M604 323.500H793" strokeDasharray="14 2" />
      <path d="M604 329.500H695.500V388.500H748.500V448.500H604M604 336.500H689.500V441M695 359.500H793M604 442.500H742l-6-6M689 440.500H708" />
      <path d="M670.500 323V420a7 7 0 0014 0V411.500H680M674.500 323V420a3 3 0 006 0V411" />
      <path d="M672.500 306V420c0 8 10 8 10 0V414" stroke="#f00" />
      <path d="M629.500 325V472" stroke="#f00" strokeDasharray="24 4 5 4" />
      <path d="M793.500 324V476.500H604" stroke="#f00" strokeDasharray="26 3 6 3" />
      <path d="M688 360h2M688 384h2M688 408h2M688 432h2M618 442h2M641 442h2M665 442h2M713 442h2M737 442h2M858 326h4" stroke="#f00" strokeWidth="2" />
      <path d="M670 319h4" stroke="#0d0" strokeWidth="2" />
      <path d="M758 297L722 411M684 411L776 492" stroke="#190" />
      <path d="M759 296.500H804M777 319.500H795M779 320l3 3 3-3M776 492.500H827" />
      <T x="759" y="295">Beton klasy B15</T>
      <T x="777" y="318">±10.00</T>
      <T x="776" y="491">L 80x80x8 – 600</T>
      <T x="776" y="499">szt. 2</T>
      <T x="622" y="496">1 100</T>
      <T x="622" y="508">2 000</T>
      <T x="609" y="537" s={18}>”</T>
      <T x="620" y="541" s={18}>Y</T>
      <T x="634" y="537" s={18}>”</T>
      <path d="M785 159.500H862M848.500 151V222M842.500 153.500h12v12h-12z" />
    </svg>
  );
}

function DocTab({ active, children }) {
  return (
    <button type="button" role="tab" aria-selected={!!active} className={"flex h-[19px] items-stretch " + (active ? "-ml-[17px] font-bold" : "")}>
      <svg width="17" height="19" viewBox="0 0 17 19" fill={active ? "#eef4fb" : "#fafbfc"} className="shrink-0" aria-hidden="true">
        <path d="M0 19C6 17 6 1 14 .500H17V19" />
        <path d="M0 19C6 17 6 1 14 .500H17" fill="none" stroke="#6f7886" />
      </svg>
      <span className={"flex items-center gap-px border-t border-[#6f7886] " + (active ? "bg-[#eef4fb]" : "bg-[#fafbfc]")}>
        <Icon name="dwg" />
        <span className="whitespace-nowrap">{children}</span>
      </span>
      <svg width="12" height="19" viewBox="0 0 12 19" fill={active ? "#eef4fb" : "#fafbfc"} className="shrink-0" aria-hidden="true">
        <path d="M0 .500C7 1 7 15 12 19H0" />
        <path d="M0 .500C7 1 7 15 12 19" fill="none" stroke="#6f7886" />
      </svg>
    </button>
  );
}

const Slash = ({ back }) => (
  <svg width="8" height="14" viewBox="0 0 8 14" className="shrink-0" aria-hidden="true">
    <path d={back ? "M1 0l6 13" : "M7 0L1 13"} stroke="#111" strokeWidth="1.300" />
  </svg>
);

const Status = ({ on, children, className }) => (
  <button
    type="button"
    aria-pressed={!!on}
    className={
      "h-5 shrink-0 border text-center " +
      (on ? "border-b-white border-l-black border-r-white border-t-black bg-[#f0f1f3] pt-px " : "border-b-[#9a9fa8] border-l-white border-r-[#9a9fa8] border-t-white ") +
      className
    }
  >
    {children}
  </button>
);

const winBtn = "flex h-[15px] w-[15px] items-center justify-center rounded-[3px] border border-[#d6e6fb]";

export default function App() {
  return (
    <div className="flex h-screen flex-col overflow-hidden bg-[#0b6466] px-[2px] pt-px font-['DejaVu_Sans_Condensed','DejaVu_Sans',sans-serif] text-[11px] leading-4 text-black">
      <div className="flex min-h-0 flex-1 flex-col rounded-t-md bg-[#4a82d6] px-[3px] pb-[3px]">
        <header className="-mx-[3px] flex h-[25px] shrink-0 items-center rounded-t-md border-t border-[#86b2ee] bg-gradient-to-r from-[#3e7bd0] via-[#5fa2f2] to-[#4078cc] px-[5px] pt-[2px]">
          <Icon name="logo" />
          <h1 className="whitespace-nowrap pl-1 text-[11px] font-bold text-white [text-shadow:1px_1px_1px_#1a3c80]">ZWCAD 2012 Profesjonalna -</h1>
          <TitleSmear />
          <div className="ml-auto flex gap-[3px]">
            <button type="button" aria-label="Minimalizuj" className={winBtn + " bg-gradient-to-b from-[#7db4f2] to-[#2f70cb]"}>
              <span className="mt-1 h-[2px] w-[6px] bg-white" />
            </button>
            <button type="button" aria-label="Maksymalizuj" className={winBtn + " bg-gradient-to-b from-[#7db4f2] to-[#2f70cb]"}>
              <span className="h-[7px] w-2 border border-t-2 border-[#d9e8fb]" />
            </button>
            <button type="button" aria-label="Zamknij" className={winBtn + " bg-gradient-to-b from-[#e58a80] to-[#c03228]"}>
              <svg width="9" height="9" viewBox="0 0 9 9" aria-hidden="true">
                <path d="M1.500 1.500l6 6M7.500 1.500l-6 6" stroke="#fff" strokeWidth="2" />
              </svg>
            </button>
          </div>
        </header>

        <div className="flex min-h-0 flex-1 flex-col bg-[#ebecee]">
          <nav className="flex h-[23px] shrink-0 items-end border-b border-[#9aa0ab] bg-gradient-to-b from-[#e6e8ec] to-[#fafafa] pl-[10px] text-[#0c0c8c]">
            <div className="flex h-5 shrink-0 items-center">
              <Icon name="dwg" size={15} />
            </div>
            <MenuButton>Plik</MenuButton>
            <MenuButton>Edycja</MenuButton>
            <MenuButton>Widok</MenuButton>
            <MenuButton>Wstaw</MenuButton>
            <MenuButton>Format</MenuButton>
            <MenuButton>Narzędzia</MenuButton>
            <MenuButton>Rysuj</MenuButton>
            <MenuButton>Wymiarowanie</MenuButton>
            <div className="relative flex shrink-0 items-end self-stretch">
              <button type="button" aria-haspopup="menu" aria-expanded="true" className="block h-5 w-[50px] rounded-t-[3px] border border-b-0 border-[#7e8ba3] bg-gradient-to-b from-[#dfe3ea] to-[#c9ced8] text-center">
                Zmiana
              </button>
              <ModifyMenu />
              <Cursor />
            </div>
            <MenuButton>Parametry</MenuButton>
            <MenuButton>Narzędzia dodatkowe</MenuButton>
            <MenuButton>Okno</MenuButton>
            <MenuButton>Pomoc</MenuButton>
            <div className="ml-auto flex h-[22px] items-center gap-[7px] pr-[6px]">
              <button type="button" aria-label="Minimalizuj rysunek" className="flex h-[10px] w-[9px] items-end pb-px">
                <span className="h-[2px] w-[7px] bg-[#000080]" />
              </button>
              <button type="button" aria-label="Przywróć rysunek">
                <svg width="10" height="10" viewBox="0 0 10 10" fill="none" stroke="#000080" aria-hidden="true">
                  <path d="M3 1h6.500M3.500 3V.500h6v5H7M1 4h6M.500 3.500h6v5h-6z" />
                </svg>
              </button>
              <button type="button" aria-label="Zamknij rysunek">
                <svg width="9" height="9" viewBox="0 0 9 9" aria-hidden="true">
                  <path d="M1 1l7 7M8 1L1 8" stroke="#000080" strokeWidth="2.200" />
                </svg>
              </button>
            </div>
          </nav>

          <div className="flex h-[26px] shrink-0 items-center border-b border-[#9aa6bc] bg-gradient-to-b from-[#cfd3da] to-[#e8eaee] pl-[11px]">
            <Tools list={["fresh", "open", "save", "|", "print", "preview", "globe", "|", "cut", "copy", "paste", "brush", "|", "undo"]} />
            <button type="button" aria-label="Lista cofnięć" className="w-3 shrink-0"><Drop /></button>
            <Tool name="redo" />
            <button type="button" aria-label="Lista ponowień" className="w-2 shrink-0"><Drop dim /></button>
            <Tools list={["|", "hand", "zoomrt", "zoomwin", "zoomprev", "|", "props", "tbl"]} />
          </div>

          <div className="flex h-[26px] shrink-0 border-b border-[#9aa6bc] bg-[#e4e6ea]">
            <div className="flex items-center border-r border-[#9aa6bc] bg-gradient-to-b from-[#cfd3da] to-[#e8eaee] pl-[11px] pr-[2px]">
              <Tools list={["layersG", "layersE", "layersP", "|"]} />
              <Combo label="Warstwa" value="0" className="w-[299px]">
                <Icon name="bulb" />
                <Icon name="lock" />
                <Icon name="sun" />
                <Icon name="sunSq" />
                <Icon name="square" />
              </Combo>
              <VSep />
              <Combo label="Kolor" value="ByLayer" className="w-[158px]">
                <Icon name="square" />
              </Combo>
              <VSep />
              <Combo label="Rodzaj linii" value="ByLayer" className="w-[122px]">
                <div className="h-[2px] w-7 bg-black" />
              </Combo>
              <VSep />
              <Combo label="Szerokość linii" value="ByLayer" className="w-[119px]">
                <div className="mr-[2px] h-[2px] w-10 bg-black" />
              </Combo>
              <VSep />
              <Tool name="props" />
            </div>
          </div>

          <div className="flex h-[26px] shrink-0 border-b border-[#9aa6bc] bg-[#e4e6ea]">
            <div className="flex items-center border-r border-[#9aa6bc] bg-gradient-to-b from-[#cfd3da] to-[#d9dce2] pl-[11px] pr-[22px]">
              <Tools
                list={["dLin", "dAli", "dArc", "dOrd", "|", "dRad", "dJog", "dDia", "dAng", "|", "dQuick", "dBase", "dCont", "|", "dSpace", "dBreak", "dLead", "dTol", "dCen", "dInsp", "dJogL", "|", "dEdit", "dLin", "dLin", "|"]}
              />
              <Combo label="Styl wymiarowania" value="ISO-25" className="w-[198px]" />
            </div>
            <div className="flex flex-1 items-center bg-gradient-to-b from-[#cfd3da] to-[#d9dce2] pl-[10px]">
              <Tools list={["tA", "tIA", "tEdit", "tFind", "tSpell"]} />
            </div>
          </div>

          <div className="flex min-h-0 flex-1">
            <aside className="flex shrink-0 items-start">
              <div className="flex w-[26px] flex-col items-center border-b border-r border-[#8f9db8] pt-[10px]">
                <Tools
                  list={["line", "xline", "pline", "polygon", "rect", "arc", "circle", "cloud", "spline", "ellipse", "earc", "insblk", "mkblk", "point", "hatch", "region", "wipe", "screw", "tbl", "tA"]}
                />
              </div>
              <div className="flex w-[26px] flex-col items-center border-b border-r border-[#8f9db8] pt-[10px]">
                <Tools
                  list={["erase", "dup", "mirror", "offset", "array", "move", "rotate", "scale", "lengthen", "stretch", "trim", "extend", "breakPt", "breakIt", "join", "chamfer", "fillet", "explode", "-", "broom"]}
                />
              </div>
              <div className="flex w-[26px] flex-col items-center border-b border-r border-[#8f9db8] pt-[10px]">
                <Tools
                  list={["sTrack", "sFrom", "-", "sEnd", "sMid", "sInt", "sApp", "sExt", "sCen", "sQuad", "sTan", "-", "sPerp", "sPar", "sIns", "sNode", "-", "sNear", "sNone", "-", "sSet"]}
                />
              </div>
            </aside>

            <main className="flex min-w-0 flex-1 flex-col">
              <div className="flex h-6 shrink-0 items-end bg-[#f4f5f6] pr-[3px]">
                <div role="tablist" className="flex items-end">
                  <DocTab>Rysunek1</DocTab>
                  <DocTab active>E:\...\suwnica.dwg</DocTab>
                </div>
                <div className="ml-auto flex items-center gap-[6px] pb-[9px]">
                  <button type="button" aria-label="Poprzedni"><svg width="8" height="9" viewBox="0 0 8 9" aria-hidden="true"><path d="M5.500 1v7L1.500 4.500z" fill="#fff" stroke="#111" /></svg></button>
                  <button type="button" aria-label="Następny"><svg width="8" height="9" viewBox="0 0 8 9" aria-hidden="true"><path d="M1.500 1v7l4-3.500z" fill="#fff" stroke="#111" /></svg></button>
                  <button type="button" aria-label="Lista okien"><svg width="8" height="9" viewBox="0 0 8 9" aria-hidden="true"><path d="M0 4h8L4 8z" fill="#111" /></svg></button>
                  <button type="button" aria-label="Zamknij kartę"><svg width="8" height="9" viewBox="0 0 8 9" aria-hidden="true"><path d="M1 1.500l6 6M7 1.500l-6 6" stroke="#111" strokeWidth="1.800" /></svg></button>
                </div>
              </div>

              <div className="relative ml-[2px] mr-px min-h-0 flex-1 overflow-hidden bg-black">
                <Drawing />
              </div>

              <div className="flex h-4 shrink-0 items-start border-b border-[#a4a8b0]">
                {["M1.500 0v9M7.500 0v9L3 4.500z", "M6.500 0v9L2 4.500z", "M1.500 0v9L6 4.500z", "M6.500 0v9M.500 0v9L5 4.500z"].map((d, i) => (
                  <button key={i} type="button" aria-label={["Pierwszy arkusz", "Poprzedni arkusz", "Następny arkusz", "Ostatni arkusz"][i]} className="flex h-[15px] w-4 shrink-0 items-center justify-center border-r-2 border-[#b4b7bd] bg-[#f4f5f7] pr-px">
                    <svg width="8" height="9" viewBox="0 0 8 9" aria-hidden="true"><path d={d} fill="#000" stroke="#000" strokeWidth=".800" /></svg>
                  </button>
                ))}
                <Slash back />
                <button type="button" className="h-[15px] bg-white px-[3px] font-bold leading-[15px]">Model</button>
                <Slash />
                <button type="button" className="h-[15px] px-1 leading-[15px]">Arkusz1</button>
                <Slash back />
                <button type="button" className="h-[15px] px-[6px] leading-[15px]">Arkusz2</button>
                <Slash />
              </div>

              <div className="mt-1 flex h-11 shrink-0 border-t border-[#8a93a2]">
                <div className="flex w-[23px] shrink-0 flex-col items-center justify-between border border-[#2e63b5] bg-[#3f7dd2] pb-[2px] pt-[3px] text-white">
                  <span className="text-[10px] leading-3 [writing-mode:vertical-rl]">P...</span>
                  <button type="button" aria-label="Zamknij wiersz poleceń" className="flex h-[15px] w-[15px] items-center justify-center rounded-[2px] border border-white bg-[#7fb0ea]">
                    <svg width="9" height="9" viewBox="0 0 9 9" aria-hidden="true"><path d="M1 1l7 7M8 1L1 8" stroke="#fff" strokeWidth="2" /></svg>
                  </button>
                </div>
                <div className="ml-[2px] flex min-w-0 flex-1 flex-col border-l border-[#8a93a2] bg-white font-['Liberation_Mono',monospace] text-[12px]">
                  <div className="flex h-[25px] shrink-0 border-b border-black">
                    <p className="flex-1 pl-[2px] pt-px">Polecenie: _OPEN</p>
                    <div className="flex w-[18px] flex-col items-center justify-around bg-gradient-to-r from-[#b9c7dc] to-[#eef2f7]">
                      <svg width="12" height="8" viewBox="0 0 12 8" aria-hidden="true"><path d="M1 7l5-6 5 6z" fill="#fff" stroke="#7f93ae" /></svg>
                      <svg width="12" height="8" viewBox="0 0 12 8" aria-hidden="true"><path d="M1 1l5 6 5-6z" fill="#fff" stroke="#7f93ae" /></svg>
                    </div>
                  </div>
                  <div className="flex min-h-0 flex-1">
                    <label htmlFor="command" className="pl-[2px]">Polecenie:</label>
                    <input id="command" type="text" className="h-4 min-w-0 flex-1 bg-transparent pl-1 outline-none" />
                    <div className="flex h-4 w-[71px] shrink-0 items-center justify-between bg-gradient-to-b from-[#b9c7dc] to-[#eef2f7] px-1">
                      <svg width="8" height="12" viewBox="0 0 8 12" aria-hidden="true"><path d="M7 1L1 6l6 5z" fill="#fff" stroke="#7f93ae" /></svg>
                      <svg width="16" height="13" viewBox="0 0 16 13" fill="none" className="mr-[18px]" aria-hidden="true"><path d="M.500.500h15v8l-3 4h-9l-3-4z" fill="#f4f7fb" stroke="#7f93ae" /><path d="M5.500 3v6M8.500 3v6M11.500 3v6" stroke="#a7b5ca" /></svg>
                      <svg width="8" height="12" viewBox="0 0 8 12" aria-hidden="true"><path d="M1 1l6 5-6 5z" fill="#fff" stroke="#7f93ae" /></svg>
                    </div>
                  </div>
                </div>
              </div>
            </main>
          </div>

          <footer className="flex h-[21px] shrink-0 items-center gap-[2px] border-t border-white pl-px text-[11px]">
            <div className="mr-[2px] h-[18px] w-[253px] shrink-0 whitespace-pre border border-black pl-px leading-4">24127.359,  4170.8966,  0</div>
            <Status className="w-[39px]">SKOK</Status>
            <Status className="w-[47px]">SIATKA</Status>
            <Status className="w-10">ORTO</Status>
            <Status on className="w-[53px]">BIEGUN</Status>
            <Status className="w-[53px]">OBJECT</Status>
            <Status on className="w-[74px]">ŚLEDZENIE</Status>
            <Status className="w-[82px]">SZEROKOŚĆ</Status>
            <Status on className="w-[50px]">MODEL</Status>
            <Status className="w-[51px]">TABLET</Status>
            <Status className="w-[33px]">DYN</Status>
            <div className="h-5 min-w-0 flex-1 overflow-hidden border border-b-white border-l-[#9a9fa8] border-r-white border-t-[#9a9fa8] pl-px leading-[18px]">Gotowy</div>
            <svg width="12" height="12" viewBox="0 0 12 12" fill="#8fa9cf" className="mr-px mt-1 shrink-0" aria-hidden="true">
              <path d="M9 1h2v2H9zM9 5h2v2H9zM9 9h2v2H9zM5 5h2v2H5zM5 9h2v2H5zM1 9h2v2H1z" />
            </svg>
          </footer>
        </div>
      </div>
      <div className="-mx-[2px] flex h-[3px] shrink-0 items-start justify-end overflow-hidden bg-gradient-to-r from-[#064849] from-40% to-[#0f6f70] to-40% pr-2 leading-none text-white">
        <span className="whitespace-pre">sample1 OT H</span>
      </div>
    </div>
  );
}
